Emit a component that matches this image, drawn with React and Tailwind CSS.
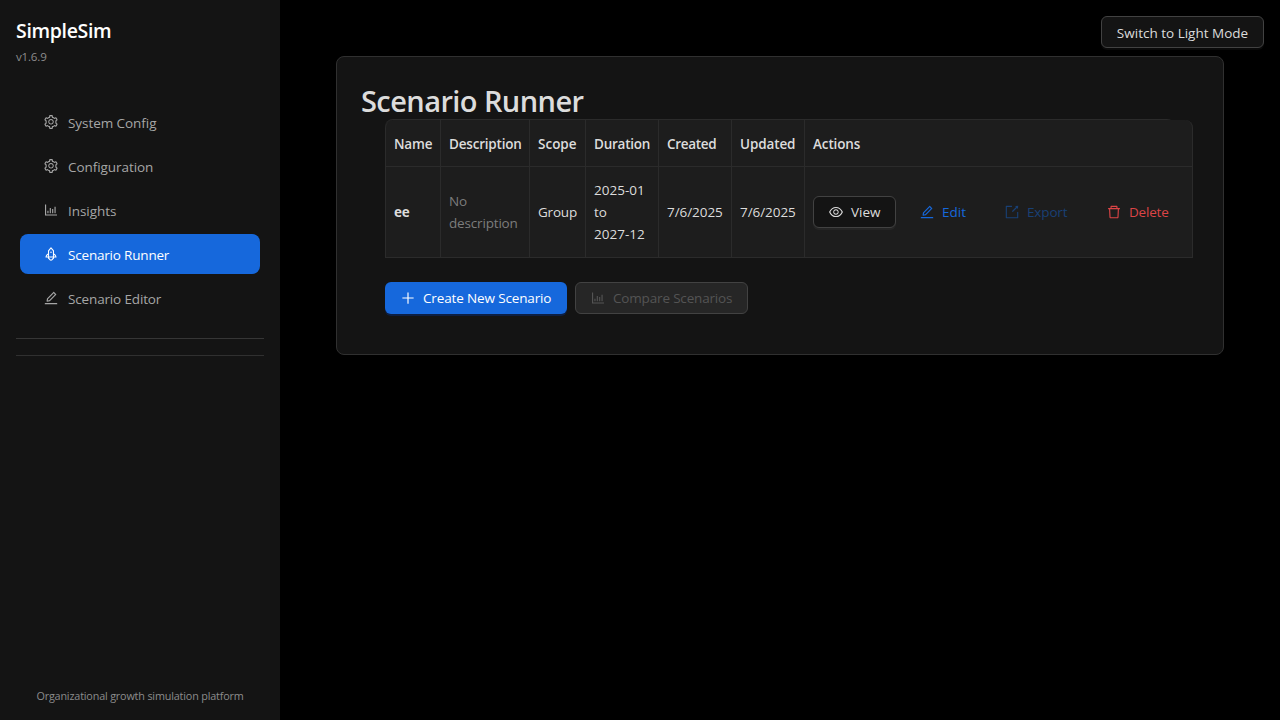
import React from 'react';
import {
  AiOutlineSetting,
  AiOutlineBarChart,
  AiOutlineRocket,
  AiOutlineEdit,
  AiOutlineEye,
  AiOutlineExport,
  AiOutlineDelete,
  AiOutlinePlus,
} from 'react-icons/ai';

const CROP = '64 64 896 896';

function Icon({ as: Glyph, className = '' }) {
  return <Glyph viewBox={CROP} className={`h-3.5 w-3.5 shrink-0 ${className}`} />;
}

const NAV = [
  { label: 'System Config', icon: AiOutlineSetting, tracking: 'tracking-[-0.06px]' },
  { label: 'Configuration', icon: AiOutlineSetting, tracking: 'tracking-[-0.06px]' },
  { label: 'Insights', icon: AiOutlineBarChart, tracking: 'tracking-[-0.06px]' },
  { label: 'Scenario Runner', icon: AiOutlineRocket, tracking: 'tracking-[-0.19px]', active: true },
  { label: 'Scenario Editor', icon: AiOutlineEdit, tracking: 'tracking-[-0.15px]' },
];

const COLUMNS = [
  { name: 'Name', tracking: 'tracking-[-0.2px]' },
  { name: 'Description', tracking: 'tracking-[-0.2px]' },
  { name: 'Scope', tracking: 'tracking-normal' },
  { name: 'Duration', tracking: 'tracking-[-0.25px]' },
  { name: 'Created', tracking: 'tracking-[-0.3px]' },
  { name: 'Updated', tracking: 'tracking-[-0.12px]' },
  { name: 'Actions', tracking: 'tracking-[-0.12px]' },
];

function Sidebar() {
  return (
    <aside className="flex w-[280px] shrink-0 flex-col bg-[#141414]">
      <div className="px-4 pt-[17px]">
        <div className="text-[19.5px] leading-7 font-semibold tracking-[-0.33px] text-white">SimpleSim</div>
        <div className="mt-[2px] text-[11.6px] leading-5 tracking-[-0.2px] text-[#8c8c8c]">v1.6.9</div>
      </div>
      <nav className="mt-[35px] flex flex-col gap-1 px-5">
        {NAV.map(({ label, icon, tracking, active }) => (
          <div
            key={label}
            className={`flex h-10 items-center rounded-lg pl-6 ${
              active ? 'bg-[#1668dc] text-white' : 'text-[#a6a6a6]'
            }`}
          >
            <Icon as={icon} />
            <span className={`mt-[2px] ml-2.5 whitespace-nowrap ${tracking}`}>{label}</span>
          </div>
        ))}
      </nav>
      <div className="mx-4 mt-5 h-px bg-[#363636]" />
      <div className="mx-4 mt-4 h-px bg-[#303030]" />
      <div className="mt-auto pb-3.5 text-center text-[10.8px] leading-5 tracking-[-0.17px] text-[#8c8c8c]">
        Organizational growth simulation platform
      </div>
    </aside>
  );
}

function ScenarioTable() {
  const cell = 'border-r border-b border-[#2b2b2b] px-2';
  return (
    <div className="h-[139px] w-[790px] rounded-t-lg border-t border-[#2b2b2b]">
      <table className="w-[808px] table-fixed border-separate border-spacing-0 rounded-t-lg border-l border-[#2b2b2b] bg-[#1d1d1d] text-left">
        <colgroup>
          <col className="w-[55px]" />
          <col className="w-[89px]" />
          <col className="w-[56px]" />
          <col className="w-[73px]" />
          <col className="w-[73px]" />
          <col className="w-[73px]" />
          <col className="w-[388px]" />
        </colgroup>
        <thead>
          <tr>
            {COLUMNS.map(({ name, tracking }) => (
              <th
                key={name}
                className={`${cell} pt-[13px] pb-[11px] font-semibold whitespace-nowrap last:rounded-tr-lg ${tracking}`}
              >
                {name}
              </th>
            ))}
          </tr>
        </thead>
        <tbody>
          <tr>
            <td className={`${cell} py-3 font-bold tracking-[-0.3px]`}>ee</td>
            <td className={`${cell} py-3 tracking-[-0.17px] text-[#7c7c7c]`}>
              No
              <br />
              description
            </td>
            <td className={`${cell} py-3 tracking-[-0.2px]`}>Group</td>
            <td className={`${cell} py-3`}>
              2025-01
              <br />
              to
              <br />
              2027-12
            </td>
            <td className={`${cell} py-3 tracking-[-0.06px]`}>7/6/2025</td>
            <td className={`${cell} py-3 tracking-[-0.06px]`}>7/6/2025</td>
            <td className={`${cell} py-3`}>
              <div className="flex items-center gap-2 whitespace-nowrap">
                <button className="flex h-8 w-[83px] items-center gap-2 rounded-md border border-[#424242] bg-[#141414] pl-[15px] shadow-[0_2px_0_rgba(255,255,255,0.04)]">
                  <Icon as={AiOutlineEye} />
                  <span>View</span>
                </button>
                <button className="flex h-8 w-[77px] items-center gap-2 pl-4 text-[#1668dc]">
                  <Icon as={AiOutlineEdit} />
                  <span>Edit</span>
                </button>
                <button className="flex h-8 w-[94px] items-center gap-2 pl-4 tracking-[-0.15px] text-[#194075]">
                  <Icon as={AiOutlineExport} />
                  <span>Export</span>
                </button>
                <button className="flex h-8 w-[93px] items-center gap-2 pl-4 tracking-[-0.2px] text-[#dc4446]">
                  <Icon as={AiOutlineDelete} />
                  <span>Delete</span>
                </button>
              </div>
            </td>
          </tr>
        </tbody>
      </table>
    </div>
  );
}

export default function App() {
  return (
    <div className="flex h-[720px] w-[1280px] overflow-hidden bg-black font-['Open_Sans','Noto_Sans',sans-serif] text-[13.5px] leading-[22px] text-[#dcdcdc]">
      <Sidebar />
      <main className="flex min-w-0 flex-1 flex-col">
        <div className="flex h-14 justify-end pt-4 pr-4">
          <button className="flex h-8 w-[163px] items-center justify-center rounded-md border border-[#424242] bg-[#141414] pt-[2px] whitespace-nowrap shadow-[0_2px_0_rgba(255,255,255,0.04)]">
            Switch to Light Mode
          </button>
        </div>
        <section className="mx-14 h-[299px] rounded-lg border border-[#303030] bg-[#141414] p-6">
          <h1 className="h-[38px] pt-px text-[29px] leading-[38px] font-semibold tracking-[-0.58px] whitespace-nowrap">
            Scenario Runner
          </h1>
          <div className="px-6">
            <ScenarioTable />
            <div className="mt-6 flex gap-2 whitespace-nowrap">
              <button className="flex h-8 w-[182px] items-center gap-2 rounded-md bg-[#1668dc] pl-4 tracking-[-0.14px] text-white shadow-[0_2px_0_rgba(0,60,180,0.3)]">
                <Icon as={AiOutlinePlus} />
                <span>Create New Scenario</span>
              </button>
              <button className="flex h-8 w-[173px] items-center gap-2 rounded-md border border-[#424242] bg-[#262626] pl-[15px] tracking-[-0.17px] text-[#545454]">
                <Icon as={AiOutlineBarChart} />
                <span>Compare Scenarios</span>
              </button>
            </div>
          </div>
        </section>
      </main>
    </div>
  );
}
